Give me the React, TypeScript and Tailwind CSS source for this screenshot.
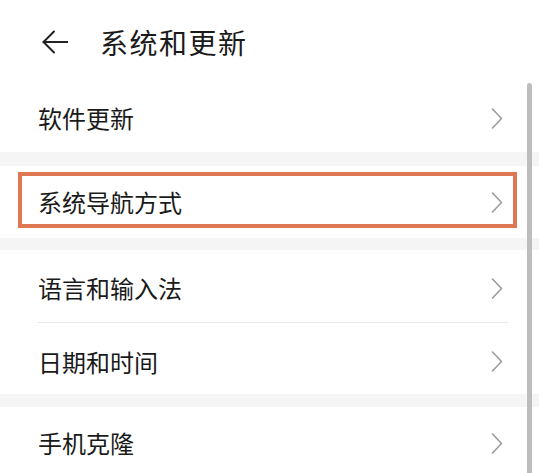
import React from 'react';

const font = { fontFamily: '"Noto Sans CJK SC", "Noto Sans", sans-serif' };

const Chevron: React.FC = () => (
  <svg width="12" height="21" viewBox="0 0 12 21" fill="none" className="shrink-0">
    <polyline points="1.5,1 10.5,10.5 1.5,20" stroke="#9b9b9b" strokeWidth="1.6" strokeLinecap="round" strokeLinejoin="round" />
  </svg>
);

const Row: React.FC<{ label: string; className?: string }> = ({ label, className = 'h-[72px]' }) => (
  <div className={`flex items-center justify-between pl-[38px] pr-[36px] ${className}`}>
    <span className="text-[24px] leading-none text-[#1a1a1a]">{label}</span>
    <Chevron />
  </div>
);

const Band: React.FC<{ h: string }> = ({ h }) => <div className={`${h} bg-[#f5f5f5]`} />;

export default function App() {
  return (
    <div className="relative w-[539px] h-[473px] overflow-hidden bg-white" style={font}>
      {/* Header */}
      <div className="h-[84px] flex items-center pl-[42px] gap-[32px]">
        <svg width="26" height="24" viewBox="0 0 26 24" fill="none" className="shrink-0">
          <line x1="1.5" y1="12" x2="25.5" y2="12" stroke="#222" strokeWidth="2" strokeLinecap="round" />
          <polyline points="12,1.5 1.5,12 12,22.5" stroke="#222" strokeWidth="2" strokeLinecap="round" strokeLinejoin="round" />
        </svg>
        <h1 className="text-[28px] leading-none text-[#1a1a1a] tracking-[1.5px]">系统和更新</h1>
      </div>

      <Row label="软件更新" className="h-[68px]" />
      <Band h="h-[14px]" />

      {/* Highlighted row */}
      <div className="relative">
        <Row label="系统导航方式" />
        <div className="absolute left-[18px] right-[22px] top-[6px] bottom-[10px] border-[4px] border-[#df7752]" />
      </div>
      <Band h="h-[12px]" />

      <Row label="语言和输入法" className="h-[72px] pt-[4px]" />
      <div className="h-px bg-[#e8e8e8] ml-[37px] mr-[31px]" />
      <Row label="日期和时间" className="h-[71px] pt-[6px]" />
      <Band h="h-[13px]" />
      <Row label="手机克隆" />

      {/* Scrollbar */}
      <div className="absolute left-[527px] top-[83px] bottom-0 w-[5px] rounded-t-full bg-[#bdbdbd]" />
    </div>
  );
}
